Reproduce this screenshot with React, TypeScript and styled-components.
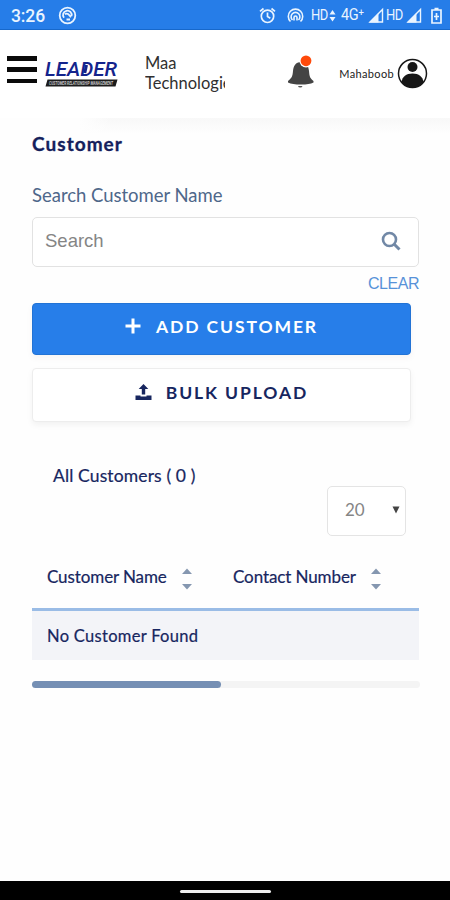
import React from "react";
import styled, { createGlobalStyle } from "styled-components";

const GlobalStyle = createGlobalStyle`
  * { box-sizing: border-box; }
  body { margin: 0; background: #fff; font-family: Lato, "Open Sans", sans-serif; }
`;

const navy = "#17265f";

const Screen = styled.div`
  width: 450px;
  height: 900px;
  display: flex;
  flex-direction: column;
  background: #fefefe;
  overflow: hidden;
`;

const StatusBar = styled.div`
  height: 30px;
  flex: none;
  display: flex;
  align-items: center;
  padding: 2px 8px 0 11px;
  background: #267de8;
  border-bottom: 1px solid #1768cb;
  color: #e9f4ff;
  font-family: Roboto, sans-serif;
  svg { display: block; flex: none; }
`;

const Clock = styled.span`
  width: 47px;
  font-size: 17.5px;
  font-weight: 500;
  letter-spacing: -0.1px;
`;

const StatusIcons = styled.div`
  margin-left: auto;
  display: flex;
  align-items: center;
`;

const StatusLabel = styled.span<{ $width: number; $size: number }>`
  width: ${(p) => p.$width}px;
  font-size: ${(p) => p.$size}px;
  letter-spacing: -0.4px;
  white-space: nowrap;
  transform: scaleY(1.1);
`;

const Gap = styled.span<{ $w: number }>`
  width: ${(p) => p.$w}px;
`;

const Header = styled.header`
  height: 88px;
  flex: none;
  display: flex;
  align-items: flex-start;
  padding: 0 22px 0 7px;
  background: #fff;
  svg { display: block; flex: none; }
`;

const MenuButton = styled.div`
  width: 30px;
  height: 27px;
  margin-top: 26px;
  display: flex;
  flex-direction: column;
  justify-content: space-between;
`;

const MenuLine = styled.span`
  height: 4.5px;
  background: #0a0a0a;
`;

const Logo = styled.svg`
  width: 76px;
  height: 32px;
  margin: 28px 0 0 7px;
`;

const Company = styled.div`
  width: 80px;
  height: 44px;
  margin: 23px 0 0 25px;
  overflow: hidden;
  font-size: 16.5px;
  line-height: 20px;
  color: #303030;
`;

const BellWrap = styled.div`
  margin: 23px 0 0 62px;
`;

const User = styled.div`
  margin: 28px 0 0 auto;
  display: flex;
  align-items: center;
  gap: 3px;
  font-size: 11px;
  letter-spacing: 0.35px;
  color: #222;
`;

const HeaderShade = styled.div`
  height: 16px;
  flex: none;
  margin-left: 80px;
  background: linear-gradient(to right, #fefefe, transparent 30px),
    linear-gradient(#f8f8f8, #fefefe);
`;

const Content = styled.main`
  flex: 1;
  display: flex;
  flex-direction: column;
  padding: 0 31px 0 32px;
`;

const Title = styled.h1`
  margin: -2px 0 0;
  font-size: 19px;
  line-height: 24px;
  font-weight: 700;
  letter-spacing: 1.05px;
  -webkit-text-stroke: 0.3px #14205c;
  color: #14205c;
`;

const FieldLabel = styled.label`
  margin-top: 27px;
  font-size: 18.5px;
  line-height: 24px;
  letter-spacing: -0.02px;
  color: #4e678a;
`;

const SearchBox = styled.div`
  width: 387px;
  height: 50px;
  margin-top: 10px;
  padding: 0 17px 3px 12px;
  display: flex;
  align-items: center;
  justify-content: space-between;
  border: 1.5px solid #e2e2e2;
  border-radius: 5px;
  background: #fff;
  font: 18.5px "Liberation Sans", sans-serif;
  color: #858585;
`;

const Clear = styled.div`
  height: 36px;
  padding-top: 7px;
  text-align: right;
  font: 16px/20px "Liberation Sans", sans-serif;
  letter-spacing: -0.45px;
  color: #5792d8;
`;

const Button = styled.button<{ $primary?: boolean }>`
  width: 379px;
  height: ${(p) => (p.$primary ? 52 : 54)}px;
  margin: 0 0 13px;
  padding: 0 0 6px;
  display: flex;
  align-items: center;
  justify-content: center;
  gap: ${(p) => (p.$primary ? 15 : 14)}px;
  border: 1px solid ${(p) => (p.$primary ? "#2273d5" : "#ededed")};
  border-radius: 4px;
  background: ${(p) => (p.$primary ? "#277ee9" : "#fff")};
  box-shadow: 0 3px 6px ${(p) => (p.$primary ? "rgba(90, 50, 50, .05)" : "rgba(0, 0, 0, .05)")};
  color: ${(p) => (p.$primary ? "#fff" : navy)};
  font: 700 17.5px Lato, sans-serif;
  letter-spacing: 1.9px;
`;

const ListHead = styled.div`
  height: 125px;
  display: flex;
  justify-content: space-between;
  align-items: flex-start;
  padding: 29px 13px 0 21px;
  font-size: 17.5px;
  line-height: 24px;
  color: ${navy};
`;

const Count = styled.span`
  letter-spacing: 0.13px;
  -webkit-text-stroke: 0.2px ${navy};
`;

const PageSize = styled.div`
  width: 79px;
  height: 50px;
  margin-top: 22px;
  padding: 0 5px 3px 17px;
  display: flex;
  align-items: center;
  justify-content: space-between;
  border: 1.5px solid #e4e4e4;
  border-radius: 5px;
  background: #fff;
  font-size: 17px;
  color: #858585;
`;

const TableHead = styled.div`
  width: 387px;
  height: 51px;
  display: grid;
  grid-template-columns: 186px 1fr;
  align-items: start;
  padding: 4px 0 0 15px;
  border-bottom: 3px solid #9abce6;
  font-size: 17px;
  line-height: 26px;
  letter-spacing: -0.1px;
  color: ${navy};
  -webkit-text-stroke: 0.2px ${navy};
`;

const Column = styled.div`
  display: flex;
  align-items: flex-start;
  gap: 15px;
  white-space: nowrap;
  svg { margin-top: 4px; }
`;

const EmptyRow = styled.div`
  width: 387px;
  height: 49px;
  padding: 1px 15px 0;
  background: #f3f4f8;
  font-size: 16.5px;
  line-height: 49px;
  letter-spacing: 0.3px;
  color: ${navy};
  -webkit-text-stroke: 0.2px ${navy};
`;

const ScrollTrack = styled.div`
  width: 388px;
  height: 7px;
  margin-top: 21px;
  border-radius: 4px;
  background: #f4f4f4;
`;

const ScrollThumb = styled.div`
  width: 189px;
  height: 7px;
  border-radius: 4px;
  background: #758fb4;
`;

const NavBar = styled.div`
  height: 19px;
  flex: none;
  display: flex;
  align-items: center;
  justify-content: center;
  padding-top: 2px;
  background: #000;
`;

const NavPill = styled.span`
  width: 91px;
  height: 3px;
  border-radius: 2px;
  background: #eee;
`;

const SignalIcon = () => (
  <svg width="16" height="17" viewBox="0 0 16 17">
    <path d="M14.5 2.5V15H2z" fill="none" stroke="#e9f4ff" strokeWidth="1.4" />
    <path d="M10.500 6v9.500H1z" fill="#e9f4ff" />
  </svg>
);

const SortIcon = () => (
  <svg width="10" height="22" viewBox="0 0 10 22">
    <path d="M0 6 5 0.5 10 6z" fill="#8597b0" />
    <path d="M0 16 5 21.5 10 16z" fill="#8597b0" />
  </svg>
);

export default function App() {
  return (
    <>
      <GlobalStyle />
      <Screen>
        <StatusBar>
          <Clock>3:26</Clock>
          <svg width="19" height="19" viewBox="0 0 19 19" fill="none" stroke="#e9f4ff">
            <circle cx="9.5" cy="9.5" r="7.8" strokeWidth="1.8" />
            <path d="M6 11.7A4.3 4.3 0 1 1 13.5 10M7 8.3c2-2 4 .5 6 3M8.5 13.5h3.5" strokeWidth="1.8" />
          </svg>
          <StatusIcons>
            <svg width="17" height="17" viewBox="0 0 17 17" fill="none" stroke="#e9f4ff" strokeWidth="1.7">
              <circle cx="8.5" cy="9.3" r="6.2" />
              <path d="M8.5 5.5v4l2.8 1.7M1 4.3 4.5 1.5M16 4.3l-3.5-2.8" />
            </svg>
            <Gap $w={11} />
            <svg width="17" height="17" viewBox="0 0 17 17" fill="none" stroke="#e9f4ff" strokeWidth="1.6">
              <path d="M3.5 14.5A7.2 7.2 0 1 1 13.5 14.5M5.5 13a4.4 4.4 0 1 1 6 0" />
              <path d="M7 13.5v-3a1.5 1.5 0 0 1 3 0v3" />
            </svg>
            <Gap $w={7} />
            <StatusLabel $width={17} $size={13}>HD</StatusLabel>
            <Gap $w={1} />
            <svg width="7" height="14" viewBox="0 0 7 14" fill="#e9f4ff">
              <path d="M.5 5.5 3.5 1l3 4.5zM.5 8 3.5 12.5l3-4.5z" />
            </svg>
            <Gap $w={5} />
            <StatusLabel $width={26} $size={14.5}>4G⁺</StatusLabel>
            <Gap $w={1} />
            <SignalIcon />
            <Gap $w={2} />
            <StatusLabel $width={20} $size={13}>HD</StatusLabel>
            <SignalIcon />
            <Gap $w={9} />
            <svg width="11" height="17" viewBox="0 0 11 17" fill="none" stroke="#e9f4ff" strokeWidth="1.7">
              <path d="M1 3h9v13H1zM3.5 1.5h4M5.5 6v7M3 9.5h5" />
            </svg>
          </StatusIcons>
        </StatusBar>

        <Header>
          <MenuButton>
            <MenuLine />
            <MenuLine />
            <MenuLine />
          </MenuButton>
          <Logo viewBox="0 0 76 32">
            <text x="1" y="18" fontFamily="Roboto, sans-serif" fontSize="20" fontWeight="500" fontStyle="italic" textLength="72" lengthAdjust="spacingAndGlyphs" fill="#14248c">LEADER</text>
            <path d="M42.500 7 40.800 15" stroke="#14248c" strokeWidth="3" />
            <path d="M3.5 21.5h70l-2 7h-70z" fill="#1c1c1c" />
            <text x="5" y="26.8" fontFamily="Roboto, sans-serif" fontSize="4.6" fontStyle="italic" fontWeight="700" textLength="64" fill="#c8c8c8" lengthAdjust="spacingAndGlyphs">CUSTOMER RELATIONSHIP MANAGEMENT</text>
          </Logo>
          <Company>Maa Technologies</Company>
          <BellWrap>
            <svg width="28" height="38" viewBox="0 0 28 38">
              <path d="M14 9c-5.500 0-7.500 4-8 9-.5 6-1.500 7-5 10v1.500c3 1.500 7 2 13 2s9.500-.5 12.500-2V28c-3.500-3-4-4-4.500-10-.5-5-2.500-9-8-9z" fill="#444" />
              <path d="M11 33h4.500a2.300 2 0 0 1-4.500 0z" fill="#555" />
              <circle cx="19" cy="7.800" r="6.600" fill="#fff" />
              <circle cx="19" cy="7.800" r="5.400" fill="#ff4a0b" />
            </svg>
          </BellWrap>
          <User>
            <span>Mahaboob</span>
            <svg width="31" height="31" viewBox="0 0 31 31">
              <circle cx="15.500" cy="15.500" r="14" fill="#fff" stroke="#171717" strokeWidth="1.500" />
              <circle cx="15.500" cy="9" r="5" fill="#171717" />
              <path d="M4.500 24c1-5.500 4.500-8.500 11-8.500S25.500 18.500 26.500 24c-3 4-6.500 5.500-11 5.500S7.500 28 4.500 24z" fill="#171717" />
            </svg>
          </User>
        </Header>
        <HeaderShade />

        <Content>
          <Title>Customer</Title>
          <FieldLabel>Search Customer Name</FieldLabel>
          <SearchBox>
            <span>Search</span>
            <svg width="20" height="20" viewBox="0 0 20 20" fill="none" stroke="#7188a6" strokeWidth="2.6">
              <circle cx="8.5" cy="8.5" r="6.5" />
              <path d="m13 13 5.5 5.5" strokeWidth="3" />
            </svg>
          </SearchBox>
          <Clear>CLEAR</Clear>
          <Button $primary>
            <svg width="16" height="16" viewBox="0 0 16 16">
              <path d="M8 .5v15M.5 8h15" stroke="#fff" strokeWidth="3" />
            </svg>
            <span>ADD CUSTOMER</span>
          </Button>
          <Button>
            <svg width="17" height="17" viewBox="0 0 17 17" fill={navy}>
              <path d="M8.5 0 13.3 5H10.2v5.5H6.8V5H3.7zM.5 11.5h5v1h6v-1h5V16H.5z" />
            </svg>
            <span>BULK UPLOAD</span>
          </Button>
          <ListHead>
            <Count>All Customers ( 0 )</Count>
            <PageSize>
              <span>20</span>
              <svg width="8" height="8" viewBox="0 0 8 8">
                <path d="M.5.5h7L4 7.5z" fill="#444" />
              </svg>
            </PageSize>
          </ListHead>
          <TableHead>
            <Column>
              <span>Customer Name</span>
              <SortIcon />
            </Column>
            <Column>
              <span>Contact Number</span>
              <SortIcon />
            </Column>
          </TableHead>
          <EmptyRow>No Customer Found</EmptyRow>
          <ScrollTrack>
            <ScrollThumb />
          </ScrollTrack>
        </Content>

        <NavBar>
          <NavPill />
        </NavBar>
      </Screen>
    </>
  );
}
